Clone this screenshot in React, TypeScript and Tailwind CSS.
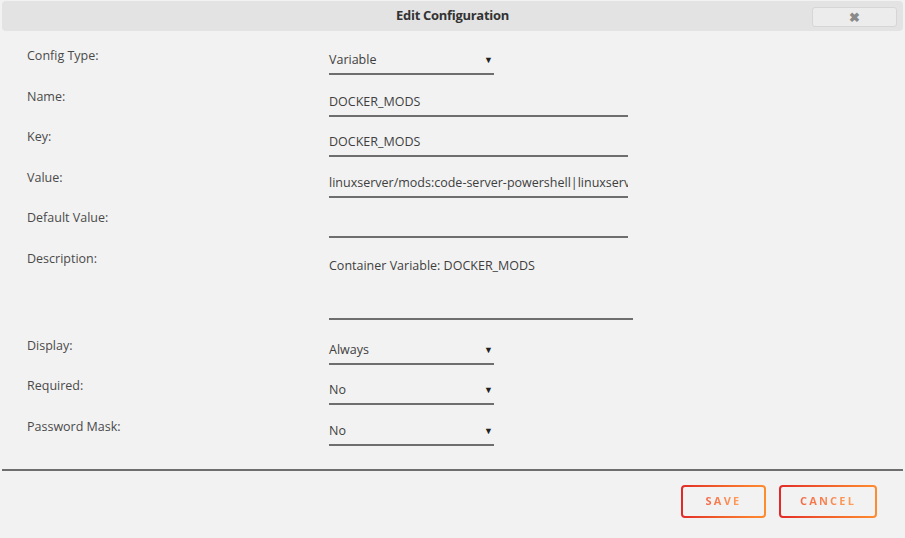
import React from 'react';

type Row =
  | { label: string; kind: 'select'; value: string }
  | { label: string; kind: 'text'; value: string }
  | { label: string; kind: 'area'; value: string };

const rows: Row[] = [
  { label: 'Config Type:', kind: 'select', value: 'Variable' },
  { label: 'Name:', kind: 'text', value: 'DOCKER_MODS' },
  { label: 'Key:', kind: 'text', value: 'DOCKER_MODS' },
  { label: 'Value:', kind: 'text', value: 'linuxserver/mods:code-server-powershell|linuxserver/mods:code-server-extension-arguments' },
  { label: 'Default Value:', kind: 'text', value: '' },
  { label: 'Description:', kind: 'area', value: 'Container Variable: DOCKER_MODS' },
  { label: 'Display:', kind: 'select', value: 'Always' },
  { label: 'Required:', kind: 'select', value: 'No' },
  { label: 'Password Mask:', kind: 'select', value: 'No' },
];

function Field({ row }: { row: Row }) {
  if (row.kind === 'select') {
    return (
      <div className="mt-1 w-[165px] h-[23px] border-b-2 border-[#6e6e6e] flex items-start justify-between">
        <span className="leading-4 text-[#3e3e3e]">{row.value}</span>
        <span className="text-[9px] leading-4 text-[#222] pr-[1px]">▼</span>
      </div>
    );
  }
  if (row.kind === 'area') {
    return (
      <div className="mt-[6px] w-[304px] h-[63px] border-b-2 border-[#6e6e6e]">
        <span className="leading-4 text-[#3e3e3e]">{row.value}</span>
      </div>
    );
  }
  return (
    <div className="mt-1 w-[299px] h-[24px] border-b-2 border-[#6e6e6e] overflow-hidden whitespace-nowrap">
      <span className="leading-4 text-[#3e3e3e]">{row.value}</span>
    </div>
  );
}

export default function App() {
  return (
    <div className="w-[905px] h-[538px] bg-[#f2f2f2] font-['Open_Sans',sans-serif] text-[12.5px] text-[#4a4a4a] flex flex-col">
      {/* Title bar */}
      <div className="mx-[2px] mt-[1px] h-[30px] rounded-[4px] bg-[#e3e3e3] relative flex items-center justify-center">
        <span className="font-bold text-[13px] text-[#333] tracking-[-0.3px]">Edit Configuration</span>
        <button className="absolute right-[6px] top-[6px] w-[85px] h-[20px] rounded-[3px] bg-[#ececec] border border-[#d6d6d6] flex items-center justify-center text-[#8a8a8a] text-[13px] font-bold leading-none">
          ✖
        </button>
      </div>

      {/* Form */}
      <div className="flex flex-col pl-[27px] pt-[17px]">
        {rows.map((row) => (
          <div key={row.label} className={row.kind === 'area' ? 'flex items-start h-[87px]' : 'flex items-start h-[40.5px]'}>
            <div className="w-[302px] leading-4">{row.label}</div>
            <Field row={row} />
          </div>
        ))}
      </div>

      {/* Footer */}
      <div className="mt-auto mx-[2px] border-t-2 border-[#6e6e6e] h-[69px] flex justify-end items-start pt-[14px] pr-[26px] gap-[13px]">
        <div className="p-[2px] rounded-[4px] bg-linear-to-r from-[#e22828] to-[#ff8c2f]">
          <div className="w-[81px] h-[29px] rounded-[2px] bg-[#f2f2f2] flex items-center justify-center">
            <span className="text-[11px] font-bold tracking-[2.2px] bg-linear-to-r from-[#f26a48] to-[#ffa05a] bg-clip-text text-transparent">SAVE</span>
          </div>
        </div>
        <div className="p-[2px] rounded-[4px] bg-linear-to-r from-[#e22828] to-[#ff8c2f]">
          <div className="w-[94px] h-[29px] rounded-[2px] bg-[#f2f2f2] flex items-center justify-center">
            <span className="text-[11px] font-bold tracking-[2.2px] bg-linear-to-r from-[#f26a48] to-[#ffa05a] bg-clip-text text-transparent">CANCEL</span>
          </div>
        </div>
      </div>
    </div>
  );
}
